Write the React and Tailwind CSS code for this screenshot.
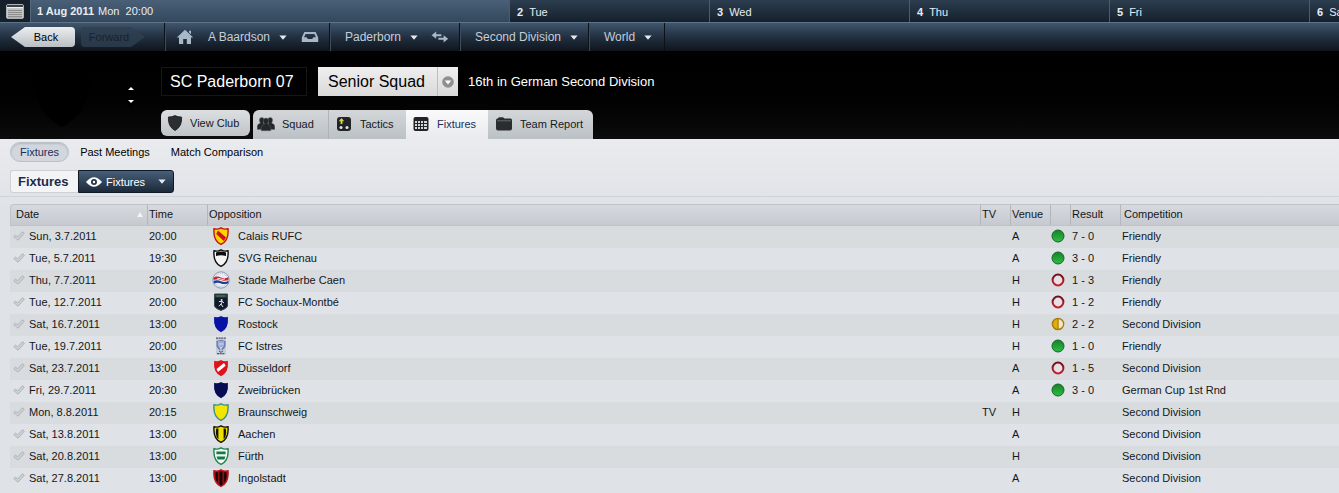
import React from 'react';

const fixtures = [
  { date: 'Sun, 3.7.2011', time: '20:00', team: 'Calais RUFC', badge: 'calais', venue: 'A', outcome: 'win', result: '7 - 0', comp: 'Friendly' },
  { date: 'Tue, 5.7.2011', time: '19:30', team: 'SVG Reichenau', badge: 'reichenau', venue: 'A', outcome: 'win', result: '3 - 0', comp: 'Friendly' },
  { date: 'Thu, 7.7.2011', time: '20:00', team: 'Stade Malherbe Caen', badge: 'caen', venue: 'H', outcome: 'loss', result: '1 - 3', comp: 'Friendly' },
  { date: 'Tue, 12.7.2011', time: '20:00', team: 'FC Sochaux-Montbé', badge: 'sochaux', venue: 'H', outcome: 'loss', result: '1 - 2', comp: 'Friendly' },
  { date: 'Sat, 16.7.2011', time: '13:00', team: 'Rostock', badge: 'rostock', venue: 'H', outcome: 'draw', result: '2 - 2', comp: 'Second Division' },
  { date: 'Tue, 19.7.2011', time: '20:00', team: 'FC Istres', badge: 'istres', venue: 'H', outcome: 'win', result: '1 - 0', comp: 'Friendly' },
  { date: 'Sat, 23.7.2011', time: '13:00', team: 'Düsseldorf', badge: 'dusseldorf', venue: 'A', outcome: 'loss', result: '1 - 5', comp: 'Second Division' },
  { date: 'Fri, 29.7.2011', time: '20:30', team: 'Zweibrücken', badge: 'zweibrucken', venue: 'A', outcome: 'win', result: '3 - 0', comp: 'German Cup 1st Rnd' },
  { date: 'Mon, 8.8.2011', time: '20:15', team: 'Braunschweig', badge: 'braunschweig', tv: 'TV', venue: 'H', comp: 'Second Division' },
  { date: 'Sat, 13.8.2011', time: '13:00', team: 'Aachen', badge: 'aachen', venue: 'A', comp: 'Second Division' },
  { date: 'Sat, 20.8.2011', time: '13:00', team: 'Fürth', badge: 'furth', venue: 'H', comp: 'Second Division' },
  { date: 'Sat, 27.8.2011', time: '13:00', team: 'Ingolstadt', badge: 'ingolstadt', venue: 'A', comp: 'Second Division' },
];

const days = [
  ['2', 'Tue'],
  ['3', 'Wed'],
  ['4', 'Thu'],
  ['5', 'Fri'],
  ['6', 'Sat'],
];

const SHIELD = 'M8 0.8C10.4 2.2 12.8 2.4 15 1.8C15.6 8.5 14.6 14.4 8 17.4C1.4 14.4 0.4 8.5 1 1.8C3.2 2.4 5.6 2.2 8 0.8Z';

// Shield outline plus whatever pattern goes inside it
const Shield = ({ fill, edge = fill, small, children }) => (
  <svg viewBox={small ? '-1 -1 18 20' : '0 0 16 18'} className="h-[18px] w-4 shrink-0" aria-hidden="true">
    <path d={SHIELD} fill={fill} stroke={edge} strokeWidth="1.4" />
    {children}
  </svg>
);

const Badge = ({ name }) => {
  switch (name) {
    case 'calais':
      return (
        <Shield fill="#ffd500" edge="#c01414">
          <path d="M5 3.4L13 10.4L10.8 14L3.2 7Z" fill="#d2131c" />
        </Shield>
      );
    case 'reichenau':
      return (
        <Shield fill="#f4f4f4" edge="#0b0b0b">
          <path d="M3 7V3.6Q8 1.4 13 3.6V7Q8 5.4 3 7Z" fill="#0b0b0b" />
        </Shield>
      );
    case 'caen':
      return (
        <svg viewBox="0 0 18 18" className="-mx-px h-[18px] w-[18px] shrink-0" aria-hidden="true">
          <circle cx="9" cy="9" r="8.2" fill="#e9edf3" stroke="#8497b7" strokeWidth="1" />
          <circle cx="9" cy="9" r="6.6" fill="none" stroke="#a9b6cb" strokeWidth="1" strokeDasharray="1 1" />
          <path d="M1.6 6.4Q5 4.4 9 6.4T16.4 6.2V9Q12 10.6 9 9T1.6 9Z" fill="#d3202c" />
          <path d="M1.6 10Q5 8.4 9 10.2T16.4 9.8V12.2Q12 13.8 9 12.4T2 12.4Z" fill="#1d3f94" />
          <path d="M5 8Q7 6.8 9 8T13 7.8" fill="none" stroke="#fff" strokeWidth="0.8" />
        </svg>
      );
    case 'sochaux':
      return (
        <svg viewBox="0 0 16 18" className="h-[18px] w-4 shrink-0" aria-hidden="true">
          <path d="M1.5 1H14.5V13Q14 15.5 8 17.4Q2 15.5 1.5 13Z" fill="#0f1b2c" stroke="#384a4a" strokeWidth="1" />
          <path d="M2 1.5H14V4.6H2Z" fill="#24433f" />
          <path d="M3.5 3H12.5" stroke="#8d9a3a" strokeWidth="1" strokeDasharray="1.4 0.6" />
          <circle cx="8.6" cy="7" r="1" fill="#dfe6ec" />
          <path d="M6 8.5L9.5 8.6L8 11L10 14M8 11L6 13.2M9.5 8.6L11 10" fill="none" stroke="#dfe6ec" strokeWidth="1" />
        </svg>
      );
    case 'rostock':
      return <Shield fill="#0a12a6" small />;
    case 'istres':
      return (
        <svg viewBox="0 0 16 18" className="h-[18px] w-4 shrink-0" aria-hidden="true">
          <path d="M3 0.5H13V17.5H3Z" fill="#c5ccda" />
          <path d="M3 1.2H13M4 16.6H12" stroke="#52596a" strokeWidth="1.2" strokeDasharray="2 0.6" />
          <path d="M8 2.8L12.6 4V9Q11.6 12.4 8 13.4Q4.4 12.4 3.4 9V4Z" fill="#6f83b9" />
          <path d="M6 4V9L8 11.6L10 9V4M8 4V16M5.6 7H10.6" fill="none" stroke="#e5eaf5" strokeWidth="0.8" />
          <path d="M6 13.8L8 15.4L10 13.8" fill="none" stroke="#34436f" strokeWidth="1" />
        </svg>
      );
    case 'dusseldorf':
      return (
        <Shield fill="#e0121b" small>
          <path d="M11.4 3.4L13.2 6.4L4.6 13.4L3 10.2Z" fill="#fff" />
        </Shield>
      );
    case 'zweibrucken':
      return <Shield fill="#060d52" small />;
    case 'braunschweig':
      return <Shield fill="#f2e600" edge="#3c8f8e" />;
    case 'aachen':
      return (
        <Shield fill="#f0e000" edge="#111">
          <path d="M3.2 3.6H5.4V14.2Q3 12 2.8 8ZM10.6 3.6H12.8L13.2 8Q13 12 10.6 14.2Z" fill="#111" />
        </Shield>
      );
    case 'furth':
      return (
        <Shield fill="#f3f8f5" edge="#1d8250">
          <path d="M3.4 4.4H12.6V7.2H3.4ZM3.6 9.6H12.4L11.4 12.4H4.6Z" fill="#147a45" />
        </Shield>
      );
    default:
      return (
        <Shield fill="#8c0f14" edge="#c3151c">
          <path d="M2.8 3.2H4.8V14Q2.6 11.6 2.4 7.4ZM6.6 2.6H9.4V16L8 16.6L6.6 16ZM11.2 3.2H13.2L13.6 7.4Q13.4 11.6 11.2 14Z" fill="#160506" />
        </Shield>
      );
  }
};

const Outcome = ({ type }) => {
  if (!type) return null;
  return (
    <svg viewBox="0 0 14 14" className="h-3.5 w-3.5" role="img" aria-label={type}>
      <defs>
        <linearGradient id="winFill" x1="0" y1="0" x2="0" y2="1">
          <stop offset="0" stopColor="#16832a" />
          <stop offset="1" stopColor="#2fbd44" />
        </linearGradient>
        <linearGradient id="lossRing" x1="0" y1="0" x2="0" y2="1">
          <stop offset="0" stopColor="#6e1018" />
          <stop offset="1" stopColor="#c32232" />
        </linearGradient>
      </defs>
      {type === 'win' && <circle cx="7" cy="7" r="6" fill="url(#winFill)" stroke="#146524" />}
      {type === 'loss' && <circle cx="7" cy="7" r="5.4" fill="#e6dfe3" stroke="url(#lossRing)" strokeWidth="2" />}
      {type === 'draw' && (
        <>
          <circle cx="7" cy="7" r="5.6" fill="#e2ac0c" stroke="#a87b10" strokeWidth="1.5" />
          <path d="M7.6 2.6A4.4 4.4 0 0 1 7.6 11.4Z" fill="#f1e8cf" />
          <path d="M7 2V12" stroke="#a87b10" strokeWidth="1" />
        </>
      )}
    </svg>
  );
};

const Check = () => (
  <svg viewBox="0 0 12 10" className="h-2.5 w-3 shrink-0" aria-hidden="true">
    <path d="M0.8 5.6L2.6 4.2L4.6 6L9.4 0.8L11.3 2.2L5 9.2Z" fill="#d0d3d7" stroke="#a9adb3" strokeWidth="0.9" strokeLinejoin="round" />
  </svg>
);

const Caret = () => (
  <svg viewBox="0 0 8 5" className="h-[5px] w-2 shrink-0" aria-hidden="true">
    <path d="M0.4 0.4H7.6L4 4.8Z" fill="#e6ebf0" />
  </svg>
);

const HomeIcon = () => (
  <svg viewBox="0 0 18 16" className="h-4 w-[18px]" aria-hidden="true">
    <path d="M9 0.8L17.2 8.4H15V15H10.8V10H7.2V15H3V8.4H0.8Z" fill="#a9b8c8" />
    <path d="M13 1.8H15V5.2L13 3.4Z" fill="#a9b8c8" />
  </svg>
);

const InboxIcon = () => (
  <svg viewBox="0 0 18 12" className="h-3 w-[18px]" aria-hidden="true">
    <path d="M3.4 1H14.6L17.2 6.4V11H0.8V6.4ZM4.6 3L3 6.2H5.6L6.8 8H11.2L12.4 6.2H15L13.4 3Z" fill="#a9b8c8" fillRule="evenodd" />
  </svg>
);

const SwapIcon = () => (
  <svg viewBox="0 0 18 12" className="h-3 w-[18px]" aria-hidden="true">
    <path d="M0.6 4.2L5.2 0.6V3.2H10.4V5.2H5.2V7.8Z" fill="#a9b8c8" />
    <path d="M17.2 7.8L12.6 4.2V6.8H7.4V8.8H12.6V11.4Z" fill="#a9b8c8" />
  </svg>
);

const CalendarIcon = () => (
  <svg viewBox="0 0 18 15" className="h-[15px] w-[18px]" aria-hidden="true">
    <rect x="0.5" y="0.5" width="17" height="14" rx="1.5" fill="#c9c9c6" stroke="#aeb2b5" />
    <path d="M1 1H17V3H1Z" fill="#3a4149" />
    <path d="M1 3.5H17" stroke="#f0f0ee" />
    <path d="M2 5H16V13.4H2Z" fill="#8d8f8f" />
    <path d="M2.5 5.5H16M2.5 7.5H16M2.5 9.5H16M2.5 11.5H16" stroke="#f0f0ee" strokeWidth="1" strokeDasharray="1 1" />
  </svg>
);

const TabIcon = ({ name }) => (
  <svg viewBox="0 0 18 16" className="h-4 w-[18px] shrink-0" aria-hidden="true">
    {name === 'club' && (
      <path d="M9 0.6Q12 2.2 15.6 2Q16.4 11.4 9 15.6Q1.6 11.4 2.4 2Q6 2.2 9 0.6Z" fill="#2b2e31" stroke="#17191b" strokeWidth="0.8" />
    )}
    {name === 'squad' && (
      <g fill="#24272a" stroke="#6c7175" strokeWidth="0.4">
        <path d="M2.4 4Q2.4 1.4 4.8 1.4T7.2 4Q7.2 6 6.2 7L8.6 8.4V13.4H0.2V10Q0.4 8.2 3.4 7Q2.4 6 2.4 4Z" />
        <path d="M10.8 4Q10.8 1.4 13.2 1.4T15.6 4Q15.6 6 14.6 7Q17.6 8.2 17.8 10V13.4H9.4V8.4L11.8 7Q10.8 6 10.8 4Z" />
        <path d="M6.4 4.8Q6.4 2 9 2T11.6 4.8Q11.6 7 10.5 8Q13.6 9.4 13.8 11.4V14.8H4.2V11.4Q4.4 9.4 7.5 8Q6.4 7 6.4 4.8Z" />
      </g>
    )}
    {name === 'tactics' && (
      <>
        <rect x="2" y="1" width="14" height="14" rx="3" fill="#212427" />
        <path d="M6.5 2L9.2 5.2H7.4V8H5.6V5.2H3.8Z" fill="#e2d43c" />
        <circle cx="6" cy="11.4" r="1.5" fill="#e4e6e8" />
        <circle cx="12" cy="11.4" r="1.5" fill="#e4e6e8" />
      </>
    )}
    {name === 'fixtures' && (
      <>
        <rect x="1.5" y="1" width="15" height="14" rx="2" fill="#212427" />
        <path d="M3 5H5V7H3ZM6 5H8V7H6ZM9 5H11V7H9ZM12 5H15V7H12ZM3 8H5V10H3ZM6 8H8V10H6ZM9 8H11V10H9ZM12 8H15V10H12ZM3 11H5V13H3ZM6 11H8V13H6ZM9 11H11V13H9ZM12 11H15V13H12Z" fill="#d5d7d9" />
      </>
    )}
    {name === 'report' && (
      <>
        <path d="M1 4Q1 2.6 2.6 2.4L4 1.2H8L9.4 2.4H15.6Q17 2.6 17 4V12.6Q17 14.6 15 14.6H3Q1 14.6 1 12.6Z" fill="#2a2d30" />
        <path d="M2 4.8H16" stroke="#75797e" strokeWidth="0.8" />
      </>
    )}
  </svg>
);

const NavItem = ({ label }) => (
  <button type="button" className="flex items-center gap-[9px]" aria-haspopup="menu">
    {label}
    <Caret />
  </button>
);

const TopBar = () => (
  <div className="flex h-[22px] overflow-hidden bg-linear-to-b from-[#2c3e50] to-[#15202c] text-[11px] text-[#e8edf2]">
    <button type="button" aria-label="Calendar" className="flex w-[31px] shrink-0 items-center justify-center border-r border-[#56697c] bg-[#16202b]">
      <CalendarIcon />
    </button>
    <div className="flex w-[478px] shrink-0 items-center gap-1 bg-linear-to-b from-[#4a6078] to-[#33485c] px-1.5">
      <b>1 Aug 2011</b>
      <span>Mon&nbsp; 20:00</span>
    </div>
    {days.map(([num, day]) => (
      <div key={num} className="flex w-[200px] shrink-0 items-center gap-1.5 border-l border-[#4b5c6c] px-[7px] pt-0.5">
        <b>{num}</b>
        <span>{day}</span>
      </div>
    ))}
  </div>
);

const NavBar = () => (
  <nav className="flex h-[29px] border-t border-[#5f7387] bg-linear-to-b from-[#40566e] via-[#223041] to-[#0f151d] text-xs text-[#c5ced7]">
    <div className="flex w-[164px] items-center gap-1.5 pl-[11px] text-[11px]">
      <button type="button" className="h-5 w-16 rounded-[4px] bg-linear-to-b from-[#eceeef] to-[#b9bfc4] pl-1.5 text-black [clip-path:polygon(0_50%,14px_0,100%_0,100%_100%,14px_100%)]">
        Back
      </button>
      <button type="button" disabled className="h-5 w-16 rounded-[4px] bg-[#2f4050] pr-2 text-[#161f29] opacity-80 [clip-path:polygon(0_0,50px_0,100%_50%,50px_100%,0_100%)]">
        Forward
      </button>
    </div>
    <div className="flex w-[165px] items-center justify-between border-l border-[#0b1118] pr-2.5 pl-[11px] shadow-[inset_1px_0_0_#3c4d5e]">
      <a href="#home" aria-label="Home"><HomeIcon /></a>
      <NavItem label="A Baardson" />
      <a href="#inbox" aria-label="Inbox"><InboxIcon /></a>
    </div>
    <div className="flex w-[130px] items-center justify-between border-l border-[#0b1118] pr-2.5 pl-[15px] shadow-[inset_1px_0_0_#3c4d5e]">
      <NavItem label="Paderborn" />
      <a href="#swap" aria-label="Switch team"><SwapIcon /></a>
    </div>
    <div className="flex w-[129px] items-center border-l border-[#0b1118] pl-[15px] shadow-[inset_1px_0_0_#3c4d5e]">
      <NavItem label="Second Division" />
    </div>
    <div className="flex w-[77px] items-center border-x border-[#0b1118] pl-[15px] shadow-[inset_1px_0_0_#3c4d5e]">
      <NavItem label="World" />
    </div>
  </nav>
);

const tabs = [
  ['squad', 'Squad', 'w-[75px] pl-1 rounded-tl-md'],
  ['tactics', 'Tactics', 'w-[78px] pl-1.5 border-l border-[#aeb4b9]'],
  ['fixtures', 'Fixtures', 'w-[82px] pl-1.5'],
  ['report', 'Team Report', 'w-[105px] pl-[7px] rounded-tr-md'],
];

const ClubHeader = () => (
  <header className="flex h-[88px] bg-linear-to-b from-black to-[#0c0c0c] text-white">
    <div className="flex w-[161px] shrink-0 items-center pl-8">
      <svg viewBox="0 0 60 66" className="h-[66px] w-[60px]" aria-hidden="true">
        <path d="M30 1Q44 7 58 5Q62 48 30 65Q-2 48 2 5Q16 7 30 1Z" fill="#000" />
      </svg>
      <div className="ml-9 flex flex-col gap-2.5 rounded-md bg-black py-1">
        <button type="button" aria-label="Previous club">
          <svg viewBox="0 0 6 3" className="h-[3px] w-1.5"><path d="M0 3L3 0L6 3Z" fill="#fff" /></svg>
        </button>
        <button type="button" aria-label="Next club">
          <svg viewBox="0 0 6 3" className="h-[3px] w-1.5"><path d="M0 0L3 3L6 0Z" fill="#fff" /></svg>
        </button>
      </div>
    </div>
    <div className="flex flex-col justify-between pt-4">
      <div className="flex items-center">
        <h1 className="flex h-[29px] w-[146px] items-center border border-[#161616] bg-black pl-2 text-base">SC Paderborn 07</h1>
        <div className="relative ml-[11px] flex h-[29px] w-[140px] items-center bg-linear-to-b from-[#efefef] to-[#d9d9d9] text-black">
          <select aria-label="Squad" className="h-full w-full appearance-none pl-2.5 text-base">
            <option>Senior Squad</option>
          </select>
          <span className="pointer-events-none absolute inset-y-0 right-0 flex w-[21px] items-center justify-center border-l border-[#bdbdbd]">
            <svg viewBox="0 0 12 12" className="h-3 w-3" aria-hidden="true">
              <circle cx="6" cy="6" r="5.8" fill="#8f8f8f" />
              <path d="M2.8 4.4H9.2L6 8.4Z" fill="#fff" />
            </svg>
          </span>
        </div>
        <p className="ml-2.5 text-[13px]">16th in German Second Division</p>
      </div>
      <div className="flex gap-[3px] text-[11px] text-[#15191d]">
        <a href="#club" className="flex h-[26px] w-[89px] items-center gap-1.5 rounded-md bg-linear-to-b from-[#dcdfe2] to-[#bfc4c9] pl-[5px]">
          <TabIcon name="club" />
          View Club
        </a>
        <div className="flex h-[29px]">
          {tabs.map(([id, label, cls]) => (
            <a
              key={id}
              href={`#${id}`}
              className={`flex items-center gap-[7px] pb-0.5 ${cls} ${
                id === 'fixtures' ? 'bg-linear-to-b from-[#fafafb] to-[#e8eaee] text-[#1c2f5a]' : 'bg-linear-to-b from-[#d3d7da] to-[#bcc1c6]'
              }`}
            >
              <TabIcon name={id} />
              {label}
            </a>
          ))}
        </div>
      </div>
    </div>
  </header>
);

const SubMenu = () => (
  <div className="border-b border-[#cfd2d6] pb-[3px] pl-2.5">
    <div className="flex h-[26px] items-center gap-[11px] text-[11px] text-black">
      <a href="#fixtures" className="flex h-5 items-center rounded-full border border-[#bcc1c8] bg-[#d3d7dd] px-[9px] text-[#1c2f5a] shadow-[inset_0_1px_2px_#b4b9c1]">
        Fixtures
      </a>
      <a href="#past" className="pr-2.5">Past Meetings</a>
      <a href="#comparison">Match Comparison</a>
    </div>
    <div className="mt-[5px] flex h-[23px] items-stretch">
      <h2 className="flex w-[68px] items-center rounded-l-[3px] border border-r-0 border-[#cdd1d6] bg-[#f3f4f6] pl-[7px] text-[13px] font-bold text-[#1b2c4b]">
        Fixtures
      </h2>
      <div className="relative flex w-24 rounded-r-[3px] border border-[#101a26] bg-linear-to-b from-[#48607a] to-[#1c2a3a] text-white">
        <svg viewBox="0 0 16 10" className="pointer-events-none absolute top-1.5 left-[7px] h-2.5 w-4" aria-hidden="true">
          <path d="M0 5Q8 -4.6 16 5Q8 14.6 0 5Z" fill="#fff" />
          <circle cx="8" cy="5" r="3" fill="#26384b" />
          <circle cx="8" cy="5" r="1.2" fill="#fff" />
        </svg>
        <select aria-label="View" className="w-full appearance-none pl-[27px] text-[11px]">
          <option>Fixtures</option>
        </select>
        <span className="pointer-events-none absolute inset-y-0 right-[7px] flex items-center"><Caret /></span>
      </div>
    </div>
  </div>
);

const columns = [
  ['Date', 'w-[137px] pl-[5px]'],
  ['Time', 'w-[60px] pl-px'],
  ['Opposition', 'pl-px'],
  ['TV', 'w-[30px] pl-px'],
  ['Venue', 'w-10 pl-px'],
  ['', 'w-5'],
  ['Result', 'w-[50px] pl-px'],
  ['Competition', 'w-[219px] pl-[3px]'],
];

const FixtureTable = () => (
  <table className="w-full table-fixed border-separate border-spacing-0 text-left text-[11px] text-[#14171a]">
    <thead>
      <tr className="h-[22px]">
        {columns.map(([label, cls], i) => (
          <th
            key={i}
            scope="col"
            className={`border-y border-l border-y-[#c0c4c9] bg-linear-to-b from-[#d6d9de] to-[#c6cad0] py-0 pr-0 pb-0.5 font-normal whitespace-nowrap ${cls} ${
              i === 0 ? 'rounded-tl-[4px] border-l-[#c0c4c9]' : 'border-l-[#b3b7bc]'
            }`}
          >
            {i === 0 ? (
              <div className="flex items-center justify-between pr-1">
                {label}
                <svg viewBox="0 0 6 5" className="h-[5px] w-1.5" aria-hidden="true"><path d="M0 5L3 0L6 5Z" fill="#f3f4f6" /></svg>
              </div>
            ) : (
              label
            )}
          </th>
        ))}
      </tr>
    </thead>
    <tbody>
      {fixtures.map((f) => (
        <tr key={f.date} className="h-[22px] odd:bg-[#d9dcdf] even:bg-[#dfe2e6]">
          <td className="pb-0.5 pl-[3px]">
            <div className="flex items-center gap-1">
              <Check />
              {f.date}
            </div>
          </td>
          <td className="pb-0.5 pl-0.5">{f.time}</td>
          <td className="pb-0.5 pl-1.5">
            <div className="flex items-center gap-[9px]">
              <Badge name={f.badge} />
              {f.team}
            </div>
          </td>
          <td className="pb-0.5 pl-0.5">{f.tv}</td>
          <td className="pb-0.5 pl-0.5">{f.venue}</td>
          <td className="pb-0.5 pl-px"><Outcome type={f.outcome} /></td>
          <td className="pb-0.5 pl-0.5">{f.result}</td>
          <td className="pb-0.5 pl-0.5">{f.comp}</td>
        </tr>
      ))}
    </tbody>
  </table>
);

export default function App() {
  return (
    <div className="flex h-screen flex-col overflow-hidden bg-[#dfe2e6] font-['Liberation_Sans',Arial,sans-serif] leading-4">
      <TopBar />
      <NavBar />
      <ClubHeader />
      <main className="flex-1 bg-linear-to-b from-[#e9ebef] to-[#dfe2e6] to-20%">
        <SubMenu />
        <div className="pt-[7px] pl-2.5">
          <FixtureTable />
        </div>
      </main>
    </div>
  );
}
